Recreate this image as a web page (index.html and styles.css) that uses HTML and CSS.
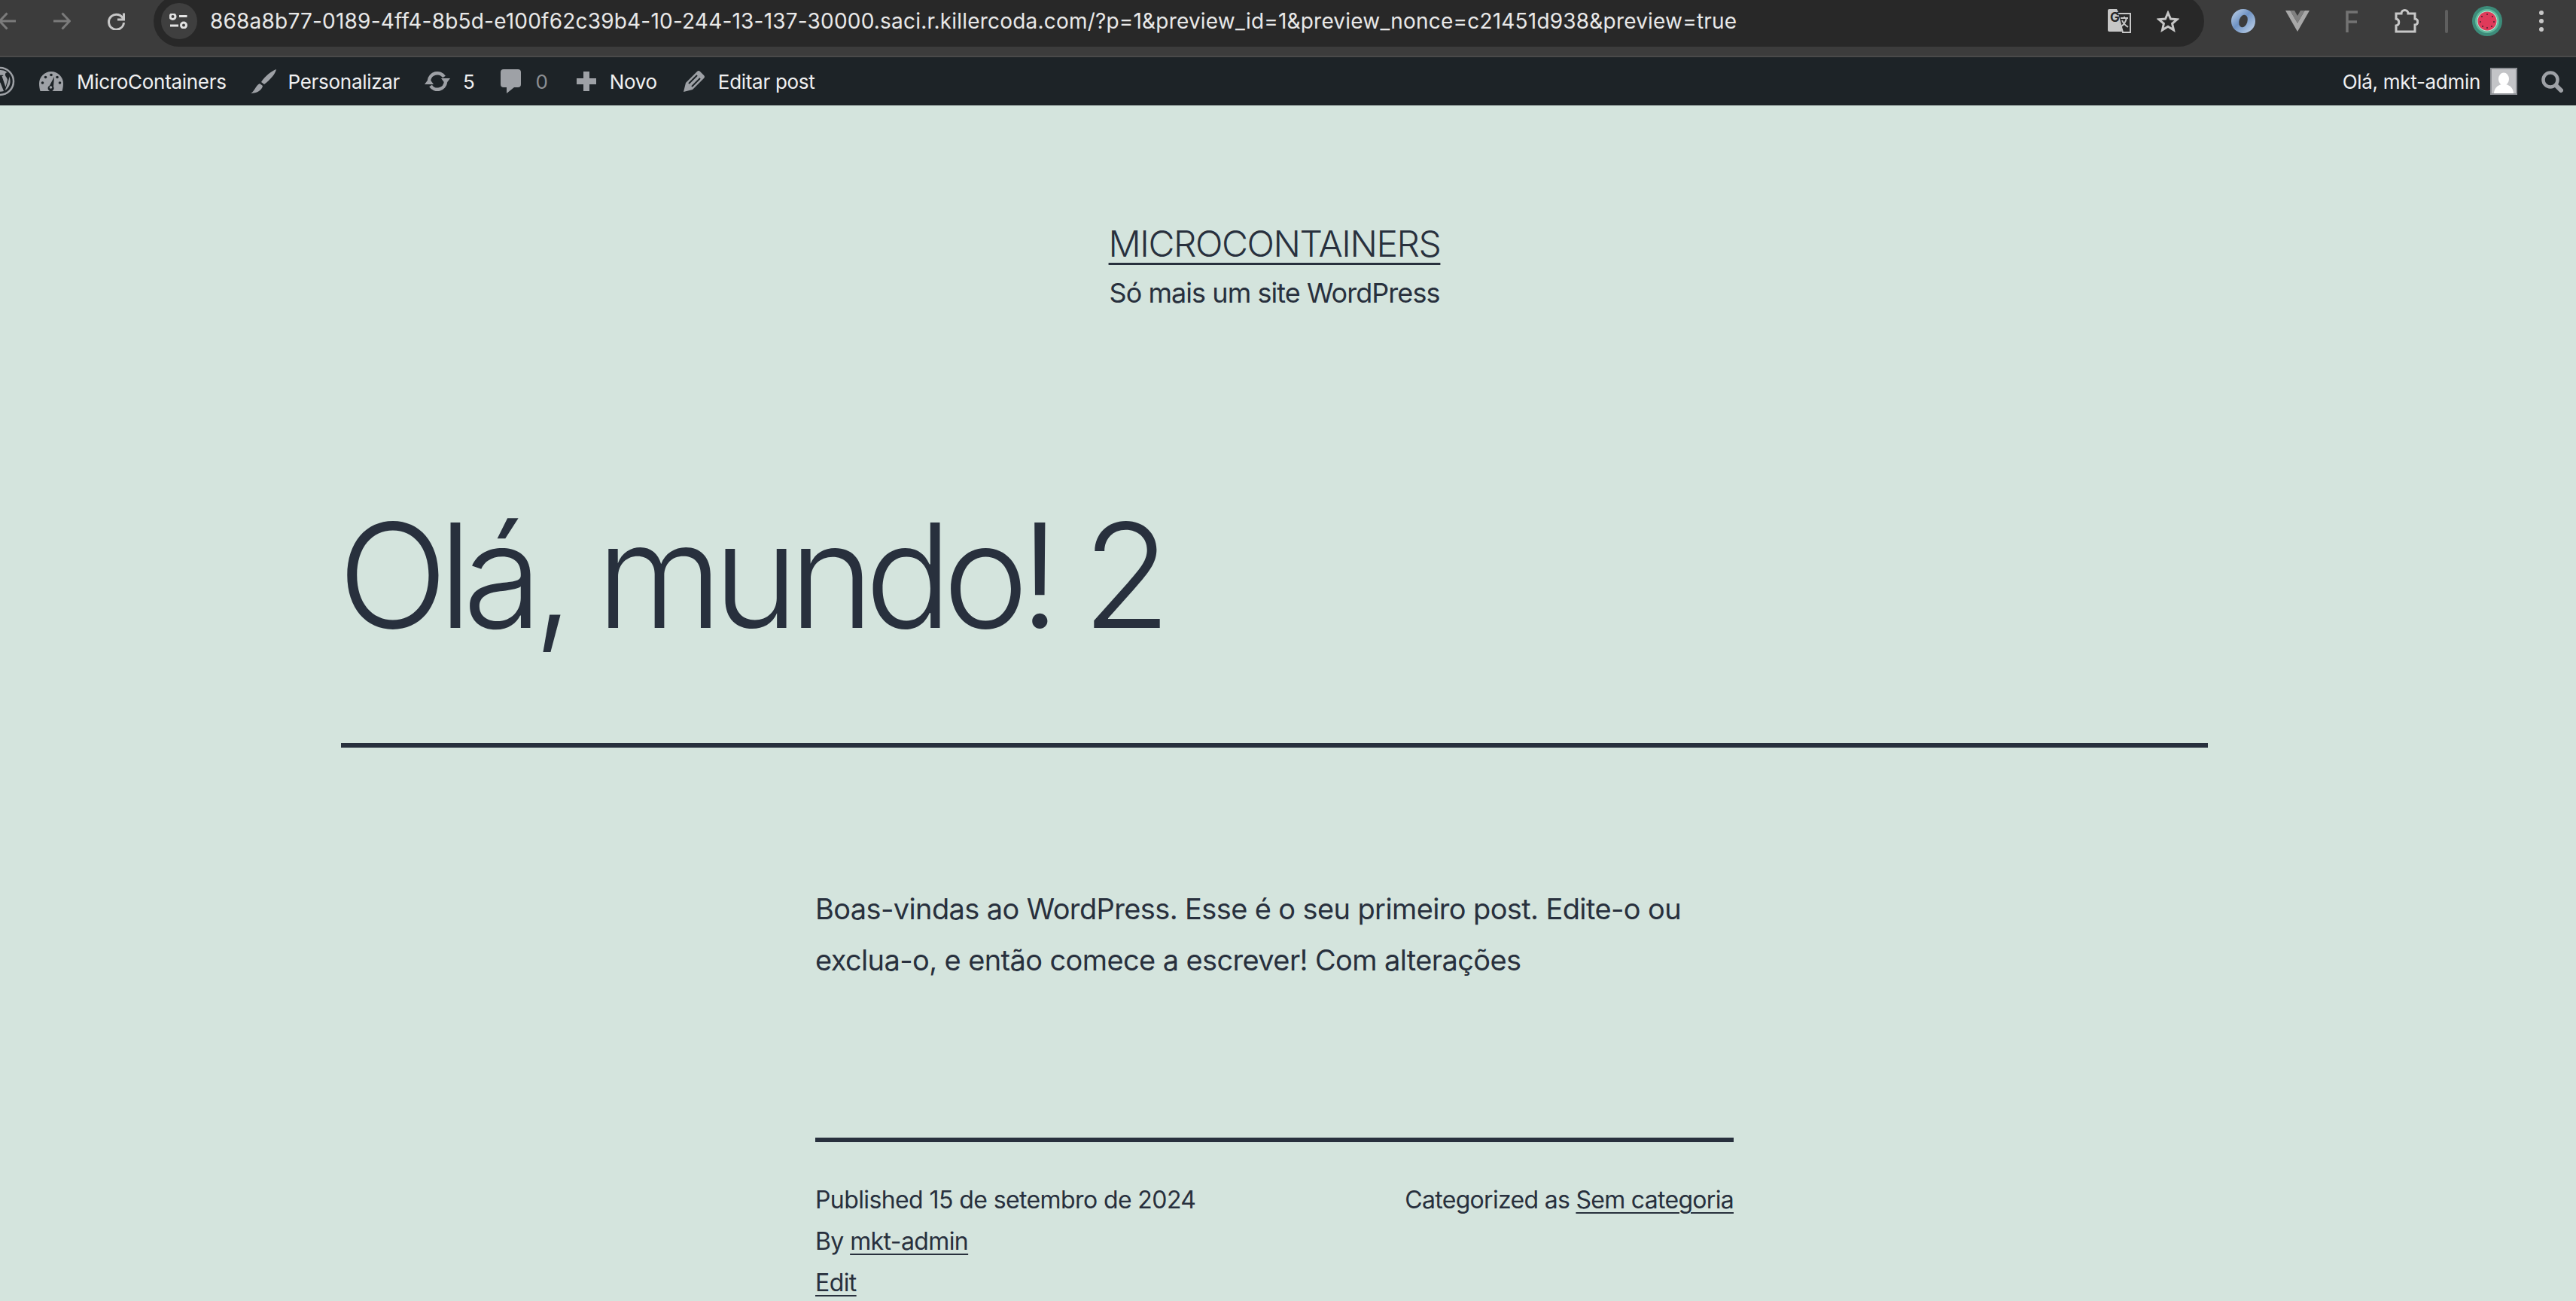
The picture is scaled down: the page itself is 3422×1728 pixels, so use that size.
FILE: index.html
```html
<!DOCTYPE html>
<html>
<head>
  <meta charset="UTF-8">
  <title>Olá, mundo! 2</title>
  <link rel="stylesheet" href="styles.css">
</head>
<body>
  <div class="chrome-bar">
    <div class="nav-btns">
      <svg class="arrow dim" width="24" height="24" viewBox="0 0 24 24"><path d="M23 12H1.500M11.500 1.500L1.500 12l10 10.500"/></svg>
      <svg class="arrow dim" width="24" height="24" viewBox="0 0 24 24"><path d="M1 12h21.500M12.500 1.500l10 10.500-10 10.500"/></svg>
      <svg class="arrow" width="24" height="24" viewBox="0 0 24 24"><path d="M22 10a10 10 0 1 0 .5 4M22.500 1.500v8.500H14"/></svg>
    </div>
    <div class="omnibox">
      <span class="tune-btn">
        <svg width="26" height="20" viewBox="0 0 26 20"><circle cx="4.500" cy="4" r="3.500"/><path d="M13 3.500h10.500M1 16h11"/><circle cx="19" cy="15.500" r="3.500"/></svg>
      </span>
      <span class="url">868a8b77-0189-4ff4-8b5d-e100f62c39b4-10-244-13-137-30000.saci.r.killercoda.com/?p=1&amp;preview_id=1&amp;preview_nonce=c21451d938&amp;preview=true</span>
      <svg class="translate-icon" width="32" height="32" viewBox="0 0 32 32">
        <path class="t-back" d="M2 0h10l2 4h-2l7 26H2a2 2 0 0 1-2-2V2a2 2 0 0 1 2-2z"/>
        <path class="t-front" d="M13 6h17v25H20z"/>
        <text x="3" y="17" class="t-g">G</text>
        <path class="t-x" d="M17 12h10M22 10v2M25 12c-1.500 6-4 9-7 11M19 15c1.500 4 4 6.500 8 9"/>
      </svg>
      <svg class="star" width="30" height="29" viewBox="0 0 30 29"><path d="M15 3l3.500 8 8.500.8-6.400 5.600 1.900 8.400L15 21.300l-7.500 4.500 1.900-8.400L3 11.800l8.500-.8z"/></svg>
    </div>
    <div class="ext-icons">
      <span class="ext-btn"><svg width="32" height="32" viewBox="0 0 32 32"><defs><linearGradient id="ringg" x1="0" y1="0" x2="1" y2="1"><stop offset="0" stop-color="#c5d6ea"/><stop offset=".45" stop-color="#6f93c4"/><stop offset="1" stop-color="#c9d9ec"/></linearGradient></defs><circle cx="16" cy="16" r="16" fill="url(#ringg)"/><ellipse cx="16" cy="16" rx="5.500" ry="8.500" fill="#3c3c3c" transform="rotate(18 16 16)"/></svg></span>
      <span class="ext-btn"><svg width="32" height="28" viewBox="0 0 32 28"><path fill="#a8a8a8" d="M0 0h6.400L16 16.600 25.600 0H32L16 28z"/><path fill="#808080" d="M6.400 0H12l4 7 4-7h5.600L16 16.600z"/></svg></span>
      <span class="ext-btn"><svg width="16" height="29" viewBox="0 0 16 29"><path fill="none" stroke="#737373" stroke-width="3.500" d="M2 29V2h14M2 15h13"/></svg></span>
      <span class="ext-btn"><svg class="puzzle" width="33" height="32" viewBox="0 0 33 32"><path d="M3 6h7c0-6 9-6 9 0h9v7c5 0 5 8 0 8v9H3v-8c5-1 5-8 0-9z"/></svg></span>
      <span class="ext-sep"></span>
      <span class="ext-btn"><svg width="40" height="40" viewBox="0 0 40 40"><circle cx="20" cy="20" r="20" fill="#3d8c7a"/><circle cx="20" cy="20" r="16" fill="#5fb89c"/><circle cx="20" cy="20" r="13.500" fill="#b6e6d2"/><circle cx="20" cy="20" r="12.500" fill="#df3a5a"/><g fill="#4a2030"><circle cx="20" cy="11" r="1"/><circle cx="13" cy="14" r="1"/><circle cx="27" cy="14" r="1"/><circle cx="11" cy="21" r="1"/><circle cx="29" cy="21" r="1"/><circle cx="14" cy="27" r="1"/><circle cx="26" cy="27" r="1"/><circle cx="20" cy="29" r="1"/></g></svg></span>
      <span class="ext-btn"><svg class="kebab" width="10" height="30" viewBox="0 0 10 30"><circle cx="5" cy="4" r="3"/><circle cx="5" cy="15" r="3"/><circle cx="5" cy="26" r="3"/></svg></span>
    </div>
  </div>

  <div class="admin-bar">
    <div class="admin-left">
      <span class="wp-logo"><svg width="40" height="40" viewBox="0 0 40 40"><circle cx="20" cy="20" r="18" fill="none" stroke="#9ea1a6" stroke-width="2.500"/><path fill="#9ea1a6" d="M6 20c0 6 3 11 8 13.500L7.500 15.500C6.600 17 6 18.500 6 20zm24-1c0-2-1-3.500-1.600-4.500-.8-1.300-1.500-2.300-1.500-3.600 0-1.400 1-2.700 2.600-2.700h.2A14 14 0 0 0 8.700 11.700h1l3.600-.2c.7 0 .8 1 .1 1.100l-1.400.1 4.900 14.600 3-8.800-2.100-5.800-1.400-.1c-.7 0-.6-1.100.1-1.100l3.700.2h3.600c.7 0 .8 1 .1 1.100l-1.400.1 4.900 14.500 1.300-4.500c.6-1.800 1-3.100 1-4.300zM20.300 21.300l-4 11.800a14 14 0 0 0 8.700-.2l-.1-.2zM32 13.500v1.500c0 1.400-.3 3-1 5l-4.200 12A14 14 0 0 0 32 13.500z"/></svg></span>
      <span class="admin-item site-name"><svg width="32" height="26" viewBox="0 0 32 26"><path fill="#9ea1a6" d="M16 0a16 16 0 0 1 16 16c0 3.500-.6 7-1.500 10h-29C.6 23 0 19.500 0 16A16 16 0 0 1 16 0z"/><g fill="#1d2327"><circle cx="16" cy="4.500" r="1.800"/><circle cx="8.500" cy="7.500" r="1.800"/><circle cx="24" cy="7.500" r="1.800"/><circle cx="4.500" cy="15" r="1.800"/><circle cx="27.500" cy="15" r="1.800"/><path d="M20 7l-6 11.500a4 4 0 1 0 5 1.500z"/></g><circle cx="15.500" cy="21" r="1.800" fill="#9ea1a6"/></svg>MicroContainers</span>
      <span class="admin-item"><svg width="34" height="32" viewBox="0 0 34 32"><path fill="#9ea1a6" d="M34 0c-1 6-8 14-16 20l-4-3C19 9 28 2 34 0zM12 19l4 3c-1 6-8 10-16 10 5-2 6-10 12-13z"/></svg>Personalizar</span>
      <span class="admin-item"><svg width="36" height="28" viewBox="0 0 36 28"><path fill="none" stroke="#9ea1a6" stroke-width="4.500" d="M7 13A11 11 0 0 1 27 8M29 15A11 11 0 0 1 9 20"/><path fill="#9ea1a6" d="M23 10h12l-6 8zM1 18h12l-6-8z"/></svg>5</span>
      <span class="admin-item comments"><svg width="27" height="32" viewBox="0 0 27 32"><path fill="#9ea1a6" d="M4 0h19a4 4 0 0 1 4 4v16a4 4 0 0 1-4 4h-5l-10 8v-8H4a4 4 0 0 1-4-4V4a4 4 0 0 1 4-4z"/></svg>0</span>
      <span class="admin-item new-post"><svg width="26" height="26" viewBox="0 0 26 26"><path fill="#9ea1a6" d="M9 0h8v9h9v8h-9v9H9v-9H0V9h9z"/></svg>Novo</span>
      <span class="admin-item edit-post"><svg width="28" height="28" viewBox="0 0 28 28"><path fill="#9ea1a6" d="M0 28l3-12L18 1q2-2 4 0l5 5q2 2 0 4L12 25z"/><path fill="none" stroke="#1d2327" stroke-width="2" d="M7 17L18 6M11 21L22 10"/></svg>Editar post</span>
    </div>
    <div class="admin-right">
      <span class="howdy">Olá, mkt-admin</span>
      <svg class="avatar" width="36" height="36" viewBox="0 0 36 36"><rect width="36" height="36" fill="#8c8f94"/><rect x="2" y="2" width="32" height="32" fill="#c3c4c7"/><ellipse cx="18" cy="15" rx="7" ry="8.500" fill="#fff"/><path fill="#fff" d="M5 34c.5-7 4-10 10-12h6c6 2 9.500 5 10 12z"/></svg>
      <svg class="search" width="29" height="29" viewBox="0 0 29 29"><circle cx="12" cy="12" r="9.500" fill="none" stroke="#9ea1a6" stroke-width="4.500"/><path d="M19.500 19.500l6.500 6.500" stroke="#9ea1a6" stroke-width="6" stroke-linecap="round"/></svg>
    </div>
  </div>

  <div class="site">
    <header class="site-header">
      <a class="site-title" href="#">MICROCONTAINERS</a>
      <p class="site-tagline">Só mais um site WordPress</p>
    </header>
    <div class="post-title-wrap">
      <h1>Olá, mundo! 2</h1>
    </div>
    <article class="post-body">
      <p>Boas-vindas ao WordPress. Esse é o seu primeiro post. Edite-o ou exclua-o, e então comece a escrever! Com alterações</p>
    </article>
    <footer class="post-meta">
      <div class="meta-left">
        <div>Published 15 de setembro de 2024</div>
        <div>By <a href="#">mkt-admin</a></div>
        <div><a href="#">Edit</a></div>
      </div>
      <div class="meta-right">Categorized as <a href="#">Sem categoria</a></div>
    </footer>
  </div>
</body>
</html>
```
FILE: styles.css
```css
* {
  box-sizing: border-box;
}

html, body {
  height: 100%;
}

body {
  margin: 0;
  overflow: hidden;
  background-color: #d4e4dd;
  color: #28303d;
  font-family: Inter, "Noto Sans", sans-serif;
}

p {
  margin: 0;
}

a {
  color: #28303d;
}

/* browser toolbar */
.chrome-bar {
  display: flex;
  align-items: flex-start;
  height: 76px;
  background-color: #3c3c3c;
  border-bottom: 2px solid #4a4a4a;
  overflow: hidden;
}

.nav-btns {
  display: flex;
  align-items: center;
  gap: 48px;
  width: 206px;
  height: 56px;
  margin-left: -2px;
}

.arrow {
  fill: none;
  stroke: #c7c7c7;
  stroke-width: 3;
  flex: none;
}

.arrow.dim {
  stroke: #7b7b7b;
}

.omnibox {
  display: flex;
  flex: none;
  align-items: center;
  width: 2724px;
  height: 68px;
  margin-top: -6px;
  padding: 0 33px 0 10px;
  border-radius: 34px;
  background-color: #282828;
}

.tune-btn {
  display: flex;
  align-items: center;
  justify-content: center;
  width: 48px;
  height: 48px;
  border-radius: 50%;
  background-color: #3f3f3f;
}

.tune-btn svg {
  fill: none;
  stroke: #e3e3e3;
  stroke-width: 3;
}

.url {
  flex: 1;
  margin-left: 17px;
  color: #e8e8e8;
  font-size: 28px;
  letter-spacing: .2px;
  white-space: nowrap;
}

.translate-icon {
  margin-right: 33px;
}

.t-back {
  fill: #c7c7c7;
}

.t-front {
  fill: #282828;
  stroke: #c7c7c7;
  stroke-width: 2;
}

.t-g {
  fill: #282828;
  font-size: 17px;
  font-weight: 700;
}

.t-x {
  fill: none;
  stroke: #c7c7c7;
  stroke-width: 2;
}

.star {
  fill: none;
  stroke: #c7c7c7;
  stroke-width: 3;
}

.ext-icons {
  display: flex;
  flex: none;
  align-items: center;
  height: 56px;
  margin-left: 16px;
}

.ext-btn {
  display: flex;
  align-items: center;
  justify-content: center;
  width: 72px;
}

.puzzle {
  fill: none;
  stroke: #c7c7c7;
  stroke-width: 3;
}

.ext-sep {
  width: 4px;
  height: 31px;
  margin: 0 16px;
  border-radius: 2px;
  background-color: #5f5f5f;
}

.kebab {
  fill: #c7c7c7;
}

/* wordpress admin bar */
.admin-bar {
  display: flex;
  align-items: center;
  justify-content: space-between;
  height: 64px;
  background-color: #1d2327;
  color: #f0f0f1;
  font-size: 26px;
  letter-spacing: -.3px;
}

.admin-left,
.admin-right,
.admin-item,
.wp-logo {
  display: flex;
  align-items: center;
}

.admin-left {
  gap: 32px;
  margin-left: -20px;
}

.admin-item {
  gap: 16px;
}

.site-name {
  gap: 18px;
}

.comments {
  gap: 20px;
  margin-left: 2px;
  color: #8c8f94;
}

.new-post {
  gap: 18px;
  margin-left: 6px;
}

.edit-post {
  gap: 18px;
  margin-left: 3px;
}

.admin-right {
  gap: 13px;
  padding-right: 17px;
}

.search {
  margin-left: 19px;
}

/* page */
.site {
  width: 3386px;
}

.site-header {
  padding-top: 150px;
  text-align: center;
  font-weight: 300;
}

.site-title {
  font-size: 48px;
  letter-spacing: -1.45px;
  line-height: 1.4;
  text-underline-offset: 8px;
  text-decoration-thickness: 3px;
}

.site-tagline {
  margin-top: 7px;
  font-size: 36px;
  font-weight: 400;
  letter-spacing: -.95px;
  line-height: 1.4;
}

.post-title-wrap {
  width: 2480px;
  margin: 244px auto 0;
  padding-bottom: 117px;
  border-bottom: 6px solid #28303d;
}

h1 {
  margin: 0 0 0 -4px;
  font-size: 192px;
  font-weight: 300;
  letter-spacing: -12.2px;
  line-height: 1.1;
}

.post-body {
  width: 1220px;
  margin: 180px auto 0;
  font-size: 38px;
  letter-spacing: -.62px;
  line-height: 68px;
}

.post-meta {
  display: flex;
  justify-content: space-between;
  width: 1220px;
  margin: 202px auto 0;
  padding-top: 49px;
  border-top: 6px solid #28303d;
  font-size: 32px;
  letter-spacing: -.6px;
  line-height: 55px;
}

.meta-right {
  letter-spacing: -.7px;
}

.post-meta a {
  text-underline-offset: 5px;
  text-decoration-thickness: 2px;
}
```
